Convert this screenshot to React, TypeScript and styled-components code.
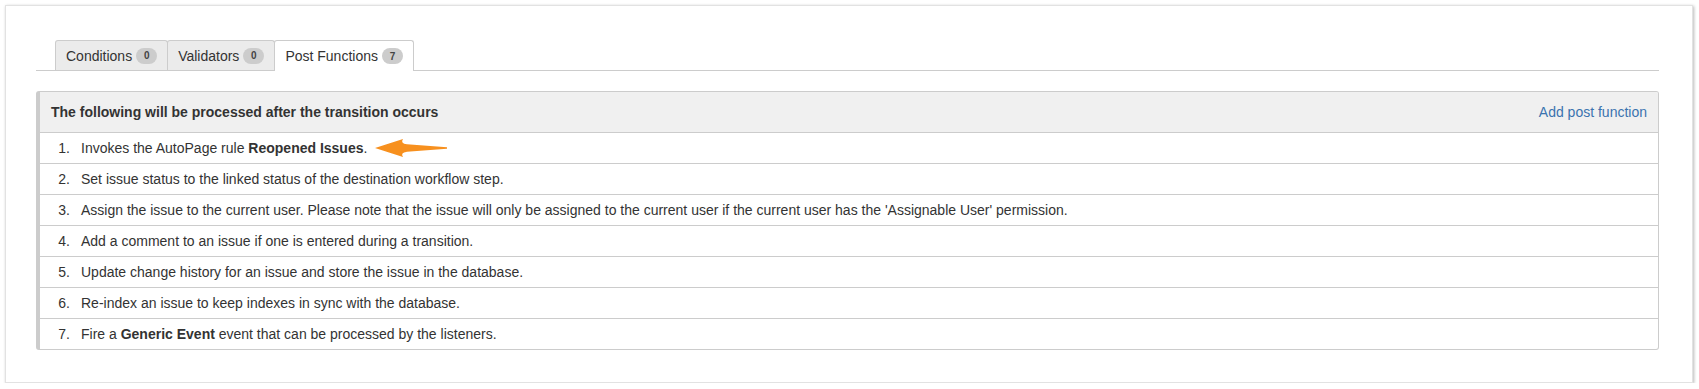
import React from "react";
import styled, { createGlobalStyle } from "styled-components";

const Global = createGlobalStyle`
  html, body { margin: 0; padding: 0; background: #ffffff; }
  body { font-family: "Liberation Sans", Arial, Helvetica, sans-serif; color: #333333; }
`;

const Card = styled.div`
  box-sizing: border-box;
  margin: 5px 6px 0 5px;
  height: 378px;
  padding: 34px 33px 0 30px;
  background: #ffffff;
  border: 1px solid #e2e2e2;
  box-shadow: 1px 1px 3px rgba(0, 0, 0, 0.28);
`;

const TabBar = styled.div`
  display: flex;
  padding-left: 20px;
  border-bottom: 1px solid #cccccc;
  height: 30px;
`;

const Tab = styled.div<{ $active?: boolean }>`
  display: flex;
  align-items: center;
  gap: 4px;
  box-sizing: border-box;
  height: ${(p) => (p.$active ? "31px" : "30px")};
  padding: 0 10px 0 10px;
  margin-left: -1px;
  border: 1px solid #cccccc;
  border-bottom: none;
  border-radius: 3px 3px 0 0;
  background: ${(p) => (p.$active ? "#ffffff" : "#ebebeb")};
  font-size: 14px;
  color: #333333;
`;

const Badge = styled.span`
  display: inline-flex;
  align-items: center;
  justify-content: center;
  min-width: 21px;
  height: 16px;
  padding: 0 2px;
  box-sizing: border-box;
  border-radius: 8px;
  background: #cccccc;
  color: #444444;
  font-size: 10px;
  font-weight: bold;
`;

const Panel = styled.div`
  margin-top: 20px;
  border: 1px solid #cccccc;
  border-left: 4px solid #cccccc;
  border-radius: 3px;
  overflow: hidden;
`;

const Header = styled.div`
  display: flex;
  align-items: center;
  justify-content: space-between;
  height: 40px;
  padding: 0 11px;
  background: #f0f0f0;
  border-bottom: 1px solid #cccccc;
  font-size: 14px;
`;

const HeaderTitle = styled.span`
  font-weight: bold;
  color: #333333;
`;

const Link = styled.a`
  color: #3b73af;
  text-decoration: none;
  font-size: 14px;
  cursor: pointer;
`;

const Row = styled.div`
  display: flex;
  align-items: center;
  height: 30px;
  border-bottom: 1px solid #cccccc;
  font-size: 14px;
  color: #333333;
  &:last-child { border-bottom: none; }
`;

const Num = styled.span`
  width: 30px;
  text-align: right;
  margin-right: 11px;
`;

const Text = styled.span`
  display: inline-flex;
  align-items: center;
  white-space: pre;
`;

const Arrow = styled.svg`
  margin-left: 8px;
  margin-top: -1px;
`;

const OrangeArrow = () => (
  <Arrow width="72" height="20" viewBox="0 0 72 20">
    <path
      d="M0 10 L28 1 Q25 5.5 32 6.3 L72 9.2 L72 10.8 L32 13.7 Q25 14.5 28 19 Z"
      fill="#f7901e"
    />
  </Arrow>
);

type Item = React.ReactNode;

const items: Item[] = [
  <>
    Invokes the AutoPage rule <b>Reopened Issues</b>.
    <OrangeArrow />
  </>,
  <>Set issue status to the linked status of the destination workflow step.</>,
  <>
    Assign the issue to the current user. Please note that the issue will only be assigned to the current user if the current user has the 'Assignable User' permission.
  </>,
  <>Add a comment to an issue if one is entered during a transition.</>,
  <>Update change history for an issue and store the issue in the database.</>,
  <>Re-index an issue to keep indexes in sync with the database.</>,
  <>
    Fire a <b>Generic Event</b> event that can be processed by the listeners.
  </>,
];

export default function App() {
  return (
    <>
      <Global />
      <Card>
        <TabBar>
          <Tab>
            Conditions <Badge>0</Badge>
          </Tab>
          <Tab>
            Validators <Badge>0</Badge>
          </Tab>
          <Tab $active>
            Post Functions <Badge>7</Badge>
          </Tab>
        </TabBar>
        <Panel>
          <Header>
            <HeaderTitle>The following will be processed after the transition occurs</HeaderTitle>
            <Link>Add post function</Link>
          </Header>
          {items.map((it, i) => (
            <Row key={i}>
              <Num>{i + 1}.</Num>
              <Text>{it}</Text>
            </Row>
          ))}
        </Panel>
      </Card>
    </>
  );
}
